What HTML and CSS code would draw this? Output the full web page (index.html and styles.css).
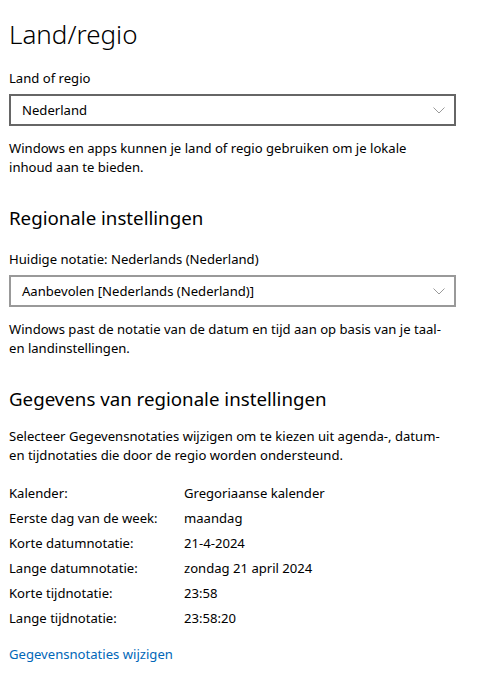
FILE: index.html
```html
<!DOCTYPE html>
<html lang="nl">
<head>
  <meta charset="UTF-8" />
  <title>Land/regio</title>
  <link rel="stylesheet" href="styles.css">
</head>
<body>
  <div class="page">
    <h1 class="title">Land/regio</h1>

    <div class="field first">
      <label class="label">Land of regio</label>
      <div class="select select-active">
        <span>Nederland</span>
        <svg class="chevron" viewBox="0 0 12 7"><path d="M0.5 0.5 L6 6 L11.5 0.5" fill="none" stroke="#9a9a9a" stroke-width="1"/></svg>
      </div>
    </div>
    <p class="text">Windows en apps kunnen je land of regio gebruiken om je lokale inhoud aan te bieden.</p>

    <h2 class="subtitle">Regionale instellingen</h2>
    <div class="field">
      <label class="label">Huidige notatie: Nederlands (Nederland)</label>
      <div class="select">
        <span>Aanbevolen [Nederlands (Nederland)]</span>
        <svg class="chevron" viewBox="0 0 12 7"><path d="M0.5 0.5 L6 6 L11.5 0.5" fill="none" stroke="#9a9a9a" stroke-width="1"/></svg>
      </div>
    </div>
    <p class="text">Windows past de notatie van de datum en tijd aan op basis van je taal- en landinstellingen.</p>

    <h2 class="subtitle">Gegevens van regionale instellingen</h2>
    <p class="text intro">Selecteer Gegevensnotaties wijzigen om te kiezen uit agenda-, datum- en tijdnotaties die door de regio worden ondersteund.</p>

    <div class="formats">
      <div class="key">Kalender:</div><div class="val">Gregoriaanse kalender</div>
      <div class="key">Eerste dag van de week:</div><div class="val">maandag</div>
      <div class="key">Korte datumnotatie:</div><div class="val">21-4-2024</div>
      <div class="key">Lange datumnotatie:</div><div class="val">zondag 21 april 2024</div>
      <div class="key">Korte tijdnotatie:</div><div class="val">23:58</div>
      <div class="key">Lange tijdnotatie:</div><div class="val">23:58:20</div>
    </div>

    <a class="link" href="#">Gegevensnotaties wijzigen</a>
  </div>
</body>
</html>
```

FILE: styles.css
```css
body {
  margin: 0;
  background: #fff;
  color: #000;
  font-family: "Noto Sans", "Open Sans", sans-serif;
  font-size: 13.1px;
}

.page {
  width: 447px;
  padding: 0 0 0 9px;
}

.title {
  font-weight: 300;
  font-size: 26px;
  margin: 0;
  padding-top: 15px;
  line-height: 38px;
}

.field {
  margin-top: 18px;
}

.field.first {
  margin-top: 16px;
}

.label {
  display: block;
  line-height: 19px;
  margin-bottom: 6px;
}

.select {
  height: 28px;
  border: 2px solid #999;
  display: flex;
  align-items: center;
  justify-content: space-between;
  padding: 0 9px 0 11px;
}

.select-active {
  border-color: #666;
}

.chevron {
  width: 12px;
  height: 7px;
}

.text {
  max-width: 438px;
  margin: 12px 0 0;
  line-height: 19px;
}

.field + .text {
  margin-top: 13px;
}

.intro {
  margin-top: 14px;
}

.subtitle {
  font-weight: 400;
  font-size: 18.7px;
  margin: 27px 0 0;
  line-height: 28px;
}

.formats {
  display: grid;
  grid-template-columns: 175px 1fr;
  row-gap: 6px;
  line-height: 19px;
  margin-top: 19px;
}

.link {
  display: inline-block;
  margin-top: 17px;
  color: #0067b8;
  text-decoration: none;
  line-height: 19px;
}
```
